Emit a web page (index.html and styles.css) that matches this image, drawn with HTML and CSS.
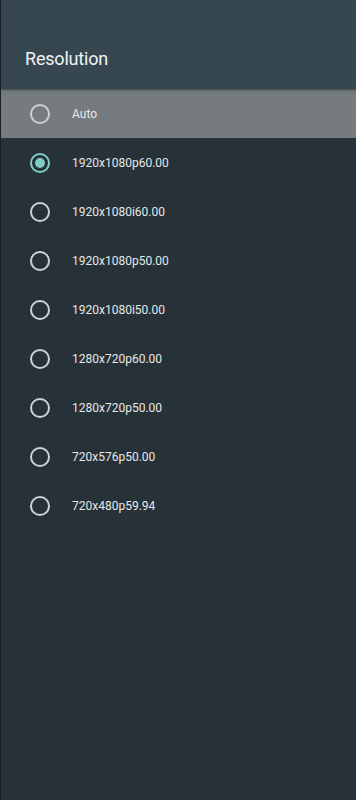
FILE: index.html
```html
<!DOCTYPE html>
<html lang="en">
<head>
    <meta charset="UTF-8">
    <meta name="viewport" content="width=device-width, initial-scale=1.0">
    <title>Resolution</title>
    <link rel="stylesheet" href="styles.css">
</head>
<body>
    <div class="panel">
        <div class="header">
            <h1>Resolution</h1>
        </div>
        <ul class="options">
            <li class="option focused"><span class="radio"></span><span class="label">Auto</span></li>
            <li class="option"><span class="radio checked"></span><span class="label">1920x1080p60.00</span></li>
            <li class="option"><span class="radio"></span><span class="label">1920x1080i60.00</span></li>
            <li class="option"><span class="radio"></span><span class="label">1920x1080p50.00</span></li>
            <li class="option"><span class="radio"></span><span class="label">1920x1080i50.00</span></li>
            <li class="option"><span class="radio"></span><span class="label">1280x720p60.00</span></li>
            <li class="option"><span class="radio"></span><span class="label">1280x720p50.00</span></li>
            <li class="option"><span class="radio"></span><span class="label">720x576p50.00</span></li>
            <li class="option"><span class="radio"></span><span class="label">720x480p59.94</span></li>
        </ul>
    </div>
</body>
</html>
```

FILE: styles.css
```css
html, body {
    margin: 0;
    padding: 0;
    height: 100%;
}
body {
    font-family: Roboto, 'Noto Sans', sans-serif;
    background: #263238;
    border-left: 1px solid #172322;
    box-sizing: border-box;
}
.panel {
    min-height: 100vh;
}
.header {
    background: #37474f;
    height: 89px;
    display: flex;
    align-items: flex-end;
    padding: 0 24px;
    box-sizing: border-box;
    box-shadow: 0 1px 3px rgba(0,0,0,0.35);
    position: relative;
}
.header h1 {
    margin: 0 0 19px;
    font-size: 18px;
    font-weight: 400;
    letter-spacing: -0.2px;
    color: #f1f3f3;
    line-height: 22px;
}
.options {
    list-style: none;
    margin: 0;
    padding: 0;
}
.option {
    height: 49px;
    display: flex;
    align-items: center;
    padding-left: 29px;
}
.option.focused {
    background: #757b7e;
    border-top: 1px solid #646b6e;
    height: 48px;
}
.radio {
    width: 16px;
    height: 16px;
    border: 2px solid #cfd2d2;
    border-radius: 50%;
    position: relative;
    flex-shrink: 0;
}
.radio.checked {
    border-color: #80cbc4;
}
.radio.checked::after {
    content: '';
    position: absolute;
    top: 3px;
    left: 3px;
    width: 10px;
    height: 10px;
    border-radius: 50%;
    background: #80cbc4;
}
.label {
    margin-left: 22px;
    font-size: 12px;
    color: #e6e8e8;
}
```
